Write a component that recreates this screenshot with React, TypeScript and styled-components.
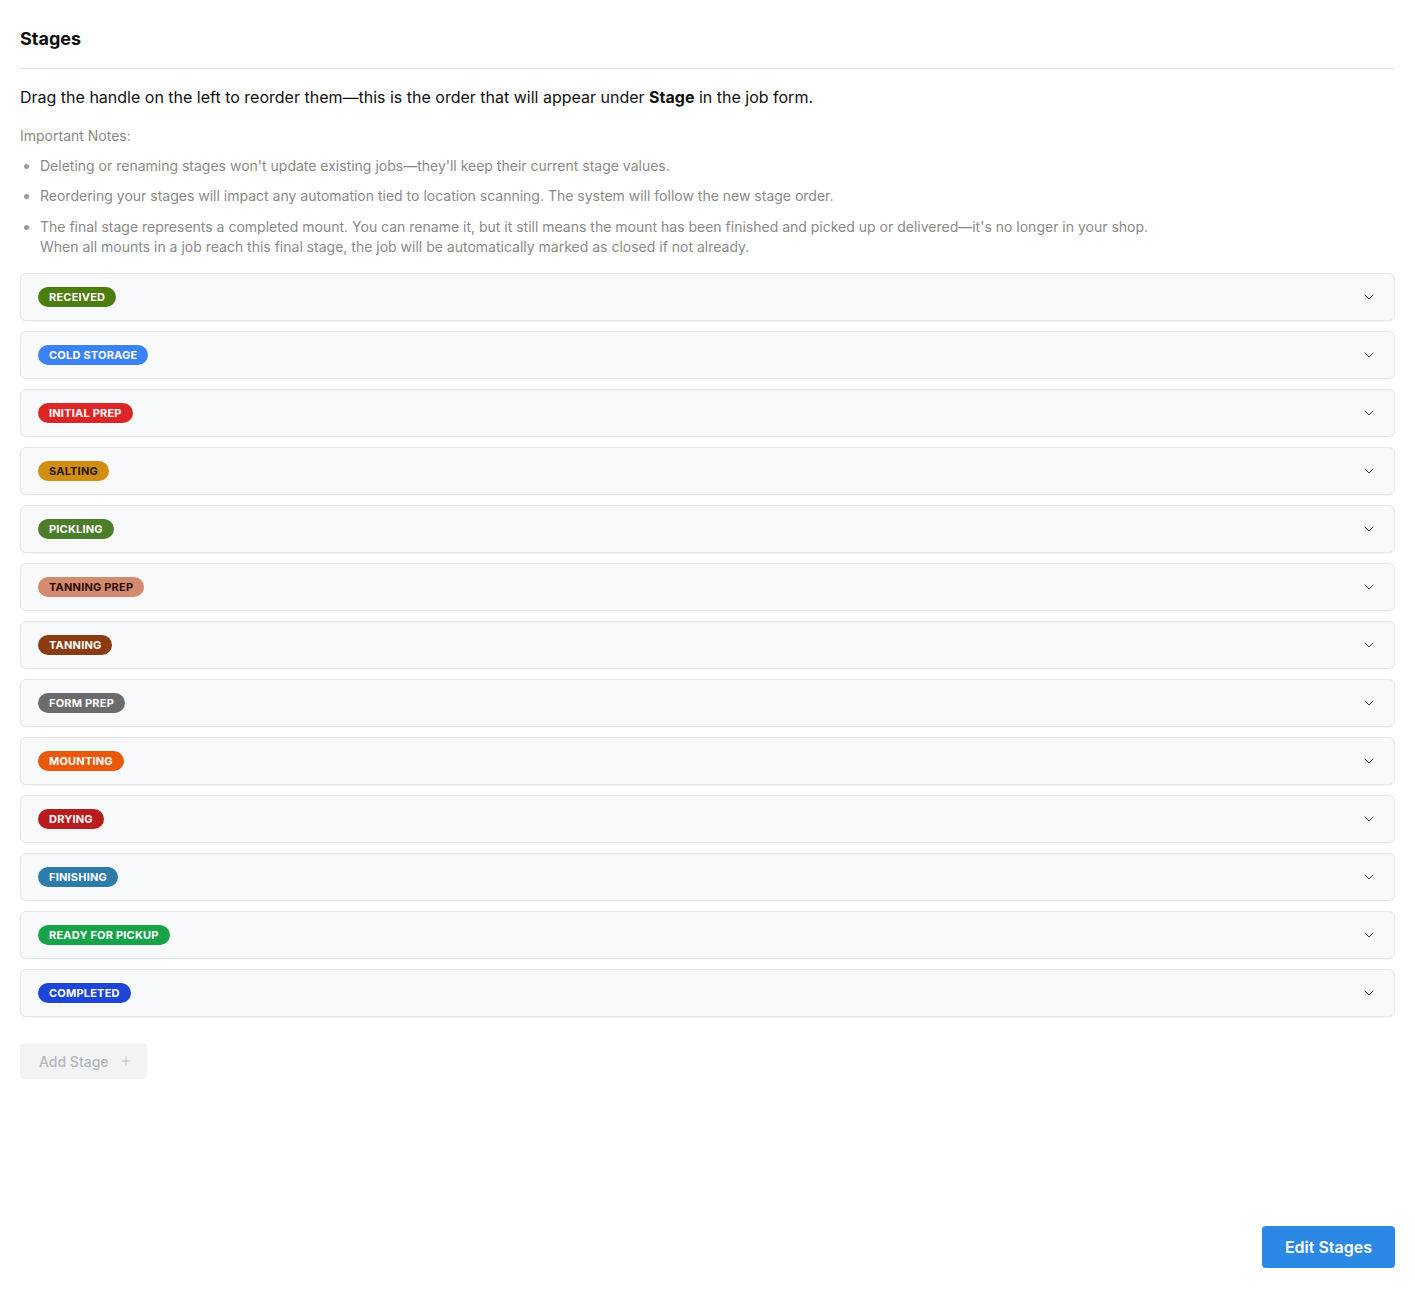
import React from "react"
import styled, { createGlobalStyle } from "styled-components"
import { ChevronDown, Plus } from "lucide-react"

const GlobalStyle = createGlobalStyle`
    * {
        box-sizing: border-box;
    }

    body {
        margin: 0;
        background: #ffffff;
        font-family: Inter, "Noto Sans", Arial, sans-serif;
        color: #111111;
    }
`

const Page = styled.div`
    min-height: 100vh;
    display: flex;
    flex-direction: column;
`

const Main = styled.main`
    padding: 25px 20px 0;
`

const Header = styled.div`
    padding-bottom: 15px;
    border-bottom: 1px solid #e2e2e2;
`

const Title = styled.h1`
    margin: 0;
    font-size: 18px;
    line-height: 28px;
    font-weight: 700;
    color: #0d0d0d;
`

const Intro = styled.p`
    margin: 16px 0 0;
    font-size: 16px;
    line-height: 24px;
    color: #111111;

    & > strong {
        font-weight: 700;
    }
`

const NotesTitle = styled.p`
    margin: 17px 0 0;
    font-size: 14px;
    line-height: 20px;
    color: #8a8a8a;
`

const Notes = styled.ul`
    margin: 10px 0 0;
    padding-left: 20px;
    font-size: 14px;
    line-height: 20px;
    color: #8a8a8a;

    & > li {
        margin-bottom: 10px;
    }

    & > li:last-child {
        margin-top: 11px;
        margin-bottom: 0;
    }

    & > li::marker {
        color: #9a9a9a;
    }
`

const StageList = styled.div`
    display: flex;
    flex-direction: column;
    gap: 10px;
    margin-top: 16px;
`

const StageRow = styled.div`
    height: 48px;
    display: flex;
    align-items: center;
    justify-content: space-between;
    padding: 0 17px 0 17px;
    background: #f8f9fa;
    border: 1px solid #e4e6e9;
    border-radius: 6px;
    box-shadow: 0 1px 1px rgba(0, 0, 0, 0.03);
`

const Badge = styled.span<{ $bg: string; $fg: string }>`
    display: inline-flex;
    align-items: center;
    height: 20px;
    padding: 0 11px;
    border-radius: 10px;
    background: ${({ $bg }) => $bg};
    color: ${({ $fg }) => $fg};
    font-size: 11px;
    font-weight: 700;
    letter-spacing: 0.2px;
    text-transform: uppercase;
`

const Toggle = styled.span`
    display: flex;
    color: #3f3f46;
`

const AddButton = styled.button`
    margin-top: 26px;
    height: 36px;
    display: inline-flex;
    align-items: center;
    gap: 10px;
    padding: 0 14px 0 19px;
    border: none;
    border-radius: 4px;
    background: #f2f3f5;
    color: #b3b6bb;
    font-family: inherit;
    font-size: 14px;
    font-weight: 500;
`

const Footer = styled.footer`
    margin-top: auto;
    display: flex;
    justify-content: flex-end;
    padding: 0 20px 21px;
`

const EditButton = styled.button`
    height: 42px;
    padding: 0 23px;
    border: none;
    border-radius: 4px;
    background: #2b88e4;
    color: #ffffff;
    font-family: inherit;
    font-size: 16px;
    font-weight: 600;
`

const stages = [
    { name: "Received", bg: "#4d7c0f", fg: "#ffffff" },
    { name: "Cold Storage", bg: "#3b82f6", fg: "#ffffff" },
    { name: "Initial Prep", bg: "#dc2626", fg: "#ffffff" },
    { name: "Salting", bg: "#d08f12", fg: "#2a1606" },
    { name: "Pickling", bg: "#4b7d2b", fg: "#ffffff" },
    { name: "Tanning Prep", bg: "#d48a6d", fg: "#2a0d06" },
    { name: "Tanning", bg: "#8a3b10", fg: "#ffffff" },
    { name: "Form Prep", bg: "#6b6b6d", fg: "#ffffff" },
    { name: "Mounting", bg: "#ea580c", fg: "#ffffff" },
    { name: "Drying", bg: "#b91c1c", fg: "#ffffff" },
    { name: "Finishing", bg: "#2d7baa", fg: "#ffffff" },
    { name: "Ready for Pickup", bg: "#17a34a", fg: "#ffffff" },
    { name: "Completed", bg: "#1d45d8", fg: "#ffffff" },
]

const App: React.FC = () => (
    <Page>
        <GlobalStyle />
        <Main>
            <Header>
                <Title>Stages</Title>
            </Header>
            <Intro>
                Drag the handle on the left to reorder them—this is the order that will appear under <strong>Stage</strong> in the job form.
            </Intro>
            <NotesTitle>Important Notes:</NotesTitle>
            <Notes>
                <li>Deleting or renaming stages won't update existing jobs—they'll keep their current stage values.</li>
                <li>Reordering your stages will impact any automation tied to location scanning. The system will follow the new stage order.</li>
                <li>
                    The final stage represents a completed mount. You can rename it, but it still means the mount has been finished and picked up or delivered—it's no longer in your shop.
                    <br />
                    When all mounts in a job reach this final stage, the job will be automatically marked as closed if not already.
                </li>
            </Notes>
            <StageList>
                {stages.map((stage) => (
                    <StageRow key={stage.name}>
                        <Badge $bg={stage.bg} $fg={stage.fg}>{stage.name}</Badge>
                        <Toggle>
                            <ChevronDown size={16} strokeWidth={1.5} />
                        </Toggle>
                    </StageRow>
                ))}
            </StageList>
            <AddButton disabled>
                Add Stage
                <Plus size={14} strokeWidth={1.5} />
            </AddButton>
        </Main>
        <Footer>
            <EditButton>Edit Stages</EditButton>
        </Footer>
    </Page>
)

export default App
